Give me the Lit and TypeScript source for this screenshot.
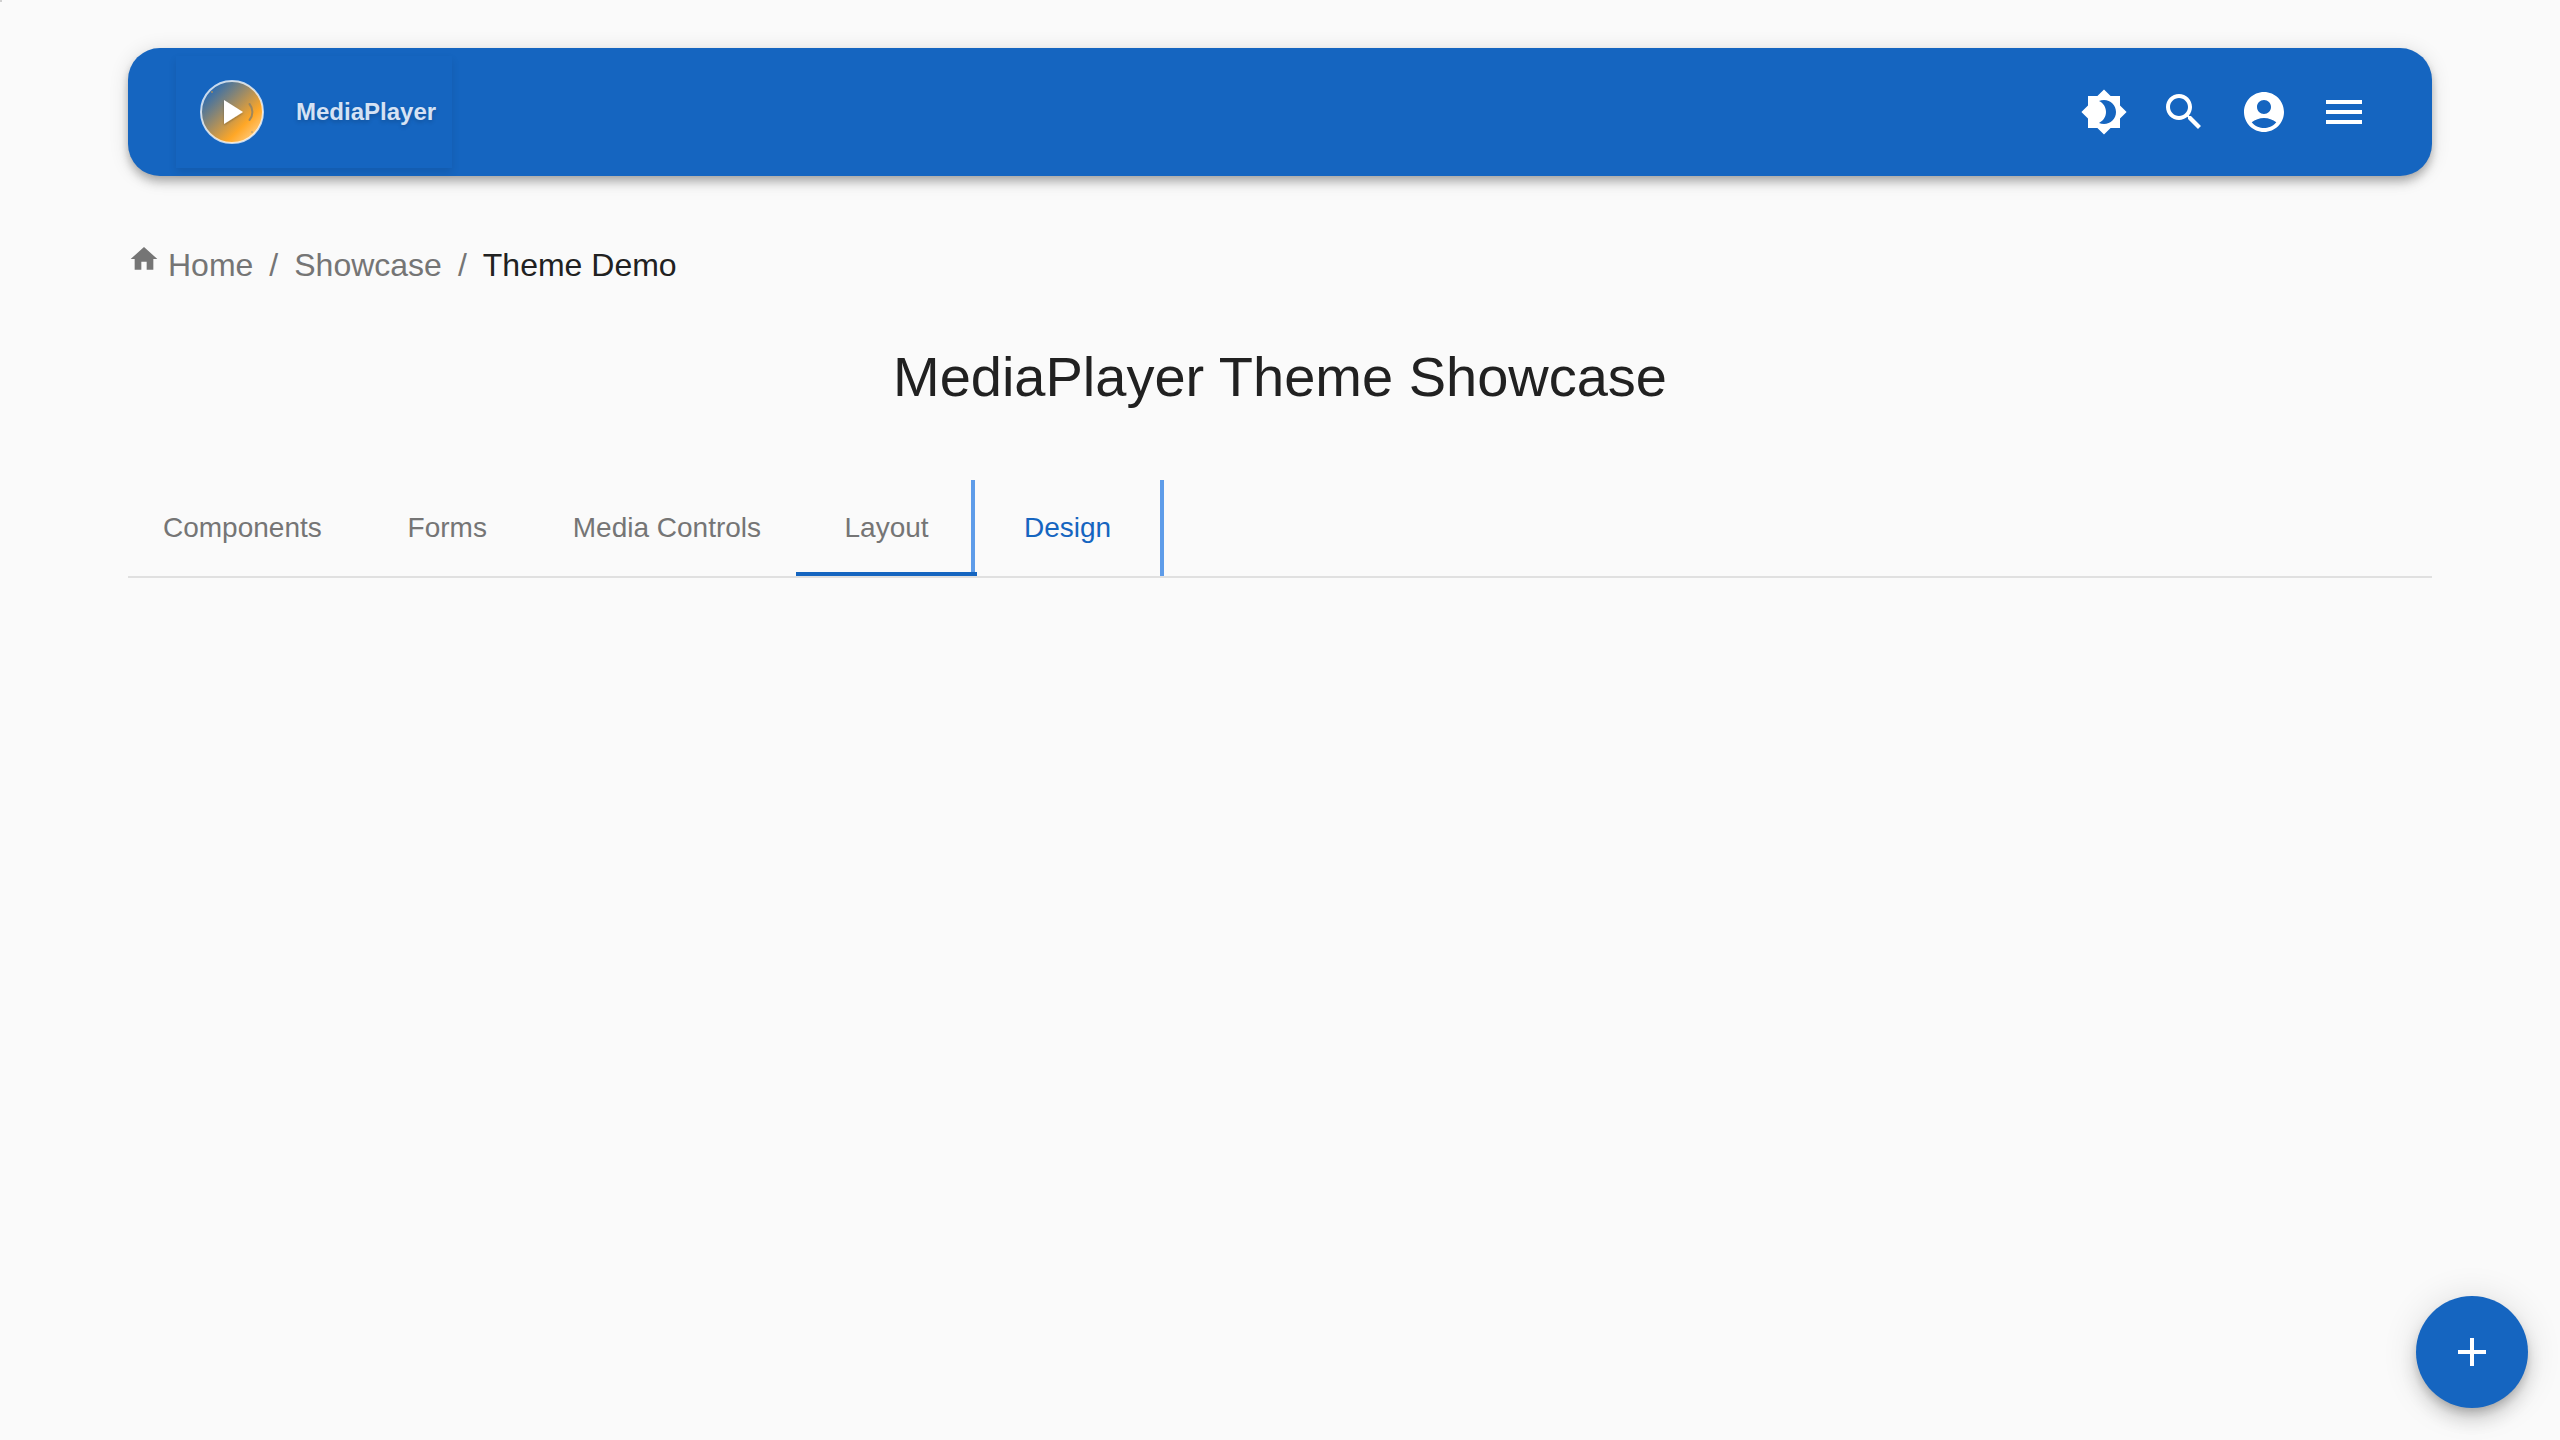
import { LitElement, html, svg, css } from "lit";
import { customElement, state } from "lit/decorators.js";

const ICONS = {
  theme: "M20 8.69V4h-4.69L12 .69 8.69 4H4v4.69L.69 12 4 15.31V20h4.69L12 23.31 15.31 20H20v-4.69L23.31 12 20 8.69zM12 18c-.89 0-1.74-.2-2.5-.55C11.56 16.5 13 14.42 13 12s-1.44-4.5-3.5-5.45C10.26 6.2 11.11 6 12 6c3.31 0 6 2.69 6 6s-2.69 6-6 6z",
  search: "M15.5 14h-.79l-.28-.27C15.41 12.59 16 11.11 16 9.5 16 5.91 13.09 3 9.5 3S3 5.91 3 9.5 5.91 16 9.5 16c1.61 0 3.09-.59 4.23-1.57l.27.28v.79l5 4.99L20.49 19l-4.99-5zm-6 0C7.01 14 5 11.99 5 9.5S7.01 5 9.5 5 14 7.01 14 9.5 11.99 14 9.5 14z",
  account: "M12 2C6.48 2 2 6.48 2 12s4.48 10 10 10 10-4.48 10-10S17.52 2 12 2zm0 4c1.93 0 3.5 1.57 3.5 3.5S13.93 13 12 13s-3.5-1.57-3.5-3.5S10.07 6 12 6zm0 14c-2.03 0-4.43-.82-6.14-2.88C7.55 15.8 9.68 15 12 15s4.45.8 6.14 2.12C16.43 19.18 14.03 20 12 20z",
  menu: "M3 18h18v-2H3v2zm0-5h18v-2H3v2zm0-7v2h18V6H3z",
  home: "M10 20v-6h4v6h5v-8h3L12 3 2 12h3v8z",
  add: "M19 13h-6v6h-2v-6H5v-2h6V5h2v6h6v2z",
};

const icon = (name: keyof typeof ICONS) => html`
  <svg class="icon" viewBox="0 0 24 24" aria-hidden="true">${svg`<path d=${ICONS[name]} />`}</svg>
`;

const TABS = ["Components", "Forms", "Media Controls", "Layout", "Design"];

@customElement("app-root")
export class AppRoot extends LitElement {
  @state() private selected = "Layout";
  @state() private highlighted = "Design";

  static styles = css`
    :host {
      display: block;
      position: relative;
      min-height: 100vh;
      box-sizing: border-box;
      padding: 48px 128px;
      background: #fafafa;
      color: #212121;
      font-family: "Liberation Sans", Arial, sans-serif;
    }
    :host::before {
      content: "";
      position: absolute;
      top: 0;
      left: 0;
      width: 2px;
      height: 2px;
      background: #d0d0d0;
    }
    * { box-sizing: border-box; }
    button { font: inherit; border: 0; background: none; padding: 0; cursor: pointer; }
    a { color: inherit; text-decoration: none; }
    .icon { display: block; width: 48px; height: 48px; fill: currentColor; }

    .bar {
      display: flex;
      align-items: center;
      justify-content: space-between;
      height: 128px;
      padding: 0 48px;
      border-radius: 32px;
      background: #1565c0;
      color: #fff;
      box-shadow: 0 4px 8px -2px rgba(0, 0, 0, 0.2), 0 8px 10px rgba(0, 0, 0, 0.14), 0 2px 20px rgba(0, 0, 0, 0.12);
    }
    .brand {
      display: flex;
      align-items: center;
      gap: 32px;
      height: 112px;
      padding: 0 16px 0 24px;
      color: #d5e2f4;
      font-size: 24px;
      font-weight: 700;
      text-shadow: 0 2px 4px rgba(0, 0, 0, 0.2);
      box-shadow: 0 4px 8px rgba(0, 0, 0, 0.1);
    }
    .logo { display: block; width: 64px; height: 64px; overflow: visible; }
    .actions { display: flex; align-items: center; }
    .action {
      display: grid;
      place-items: center;
      width: 80px;
      height: 80px;
      color: #fff;
      border-radius: 50%;
    }

    .crumbs {
      display: flex;
      align-items: center;
      list-style: none;
      margin: 65px 0 0;
      padding: 0;
      font-size: 32px;
      line-height: 48px;
      color: #757575;
    }
    .crumbs li + li::before { content: "/"; margin: 0 16px; }
    .home { display: flex; align-items: flex-start; gap: 8px; }
    .home .icon { width: 32px; height: 32px; margin-top: 2px; }
    .crumbs .here { color: #212121; }
    .crumbs .here::before { color: #757575; }

    h1 {
      margin: 52px 0 0;
      font-size: 56px;
      line-height: 72px;
      font-weight: 400;
      text-align: center;
    }

    .tabs {
      display: flex;
      margin-top: 67px;
      border-bottom: 2px solid #e0e0e0;
      overflow: hidden;
    }
    .tab {
      position: relative;
      min-width: 181px;
      height: 96px;
      padding: 0 35px;
      color: #757575;
      font-size: 28px;
      white-space: nowrap;
    }
    .tab.highlighted {
      color: #1565c0;
      outline: 4px solid #5e9ce9;
      outline-offset: 2px;
    }
    .tab[aria-selected="true"] { z-index: 1; }
    .tab[aria-selected="true"]::after {
      content: "";
      position: absolute;
      left: 0;
      right: 0;
      bottom: 0;
      height: 4px;
      background: #1565c0;
    }

    .fab {
      position: fixed;
      right: 32px;
      bottom: 32px;
      display: grid;
      place-items: center;
      width: 112px;
      height: 112px;
      border-radius: 50%;
      background: #1565c0;
      color: #fff;
      box-shadow: 0 6px 10px -2px rgba(0, 0, 0, 0.2), 0 12px 20px rgba(0, 0, 0, 0.14), 0 2px 36px rgba(0, 0, 0, 0.12);
    }
  `;

  private logo() {
    return html`
      <svg class="logo" viewBox="0 0 64 64" aria-hidden="true">
        <defs>
          <linearGradient id="disc" x1="0" y1="0" x2="1" y2="1">
            <stop offset="0.08" stop-color="#1565c0" />
            <stop offset="0.7" stop-color="#ffa726" />
            <stop offset="1" stop-color="#ffe0b2" />
          </linearGradient>
          <filter id="soft" x="-20%" y="-20%" width="140%" height="140%">
            <feDropShadow dx="0" dy="1" stdDeviation="1" flood-opacity="0.3" />
          </filter>
        </defs>
        <circle cx="32" cy="32" r="31" fill="url(#disc)" stroke="#fff" stroke-opacity="0.75" stroke-width="2" />
        <path d="M24 20v24l19-12z" fill="#fff" filter="url(#soft)" />
        <path d="M49.500 24a12.500 12.500 0 0 1 0 16" fill="none" stroke="#8a7f68" stroke-opacity="0.8" stroke-width="2" stroke-linecap="round" />
        <circle cx="12" cy="12" r="1" fill="#a08a62" />
        <circle cx="52" cy="52" r="1" fill="#c6a56c" />
      </svg>
    `;
  }

  private choose(name: string) {
    this.selected = name;
    this.highlighted = name;
  }

  render() {
    return html`
      <header class="bar">
        <a class="brand" href="#">${this.logo()}<span>MediaPlayer</span></a>
        <div class="actions">
          <button class="action" aria-label="Toggle theme">${icon("theme")}</button>
          <button class="action" aria-label="Search">${icon("search")}</button>
          <button class="action" aria-label="Account">${icon("account")}</button>
          <button class="action" aria-label="Menu">${icon("menu")}</button>
        </div>
      </header>
      <nav aria-label="Breadcrumb">
        <ol class="crumbs">
          <li><a class="home" href="#">${icon("home")}Home</a></li>
          <li><a href="#">Showcase</a></li>
          <li class="here" aria-current="page">Theme Demo</li>
        </ol>
      </nav>
      <main>
        <h1>MediaPlayer Theme Showcase</h1>
        <div class="tabs" role="tablist">
          ${TABS.map(
            (name) => html`
              <button
                class="tab ${name === this.highlighted ? "highlighted" : ""}"
                role="tab"
                aria-selected=${name === this.selected ? "true" : "false"}
                @click=${() => this.choose(name)}
              >${name}</button>
            `,
          )}
        </div>
      </main>
      <button class="fab" aria-label="Add">${icon("add")}</button>
    `;
  }
}
